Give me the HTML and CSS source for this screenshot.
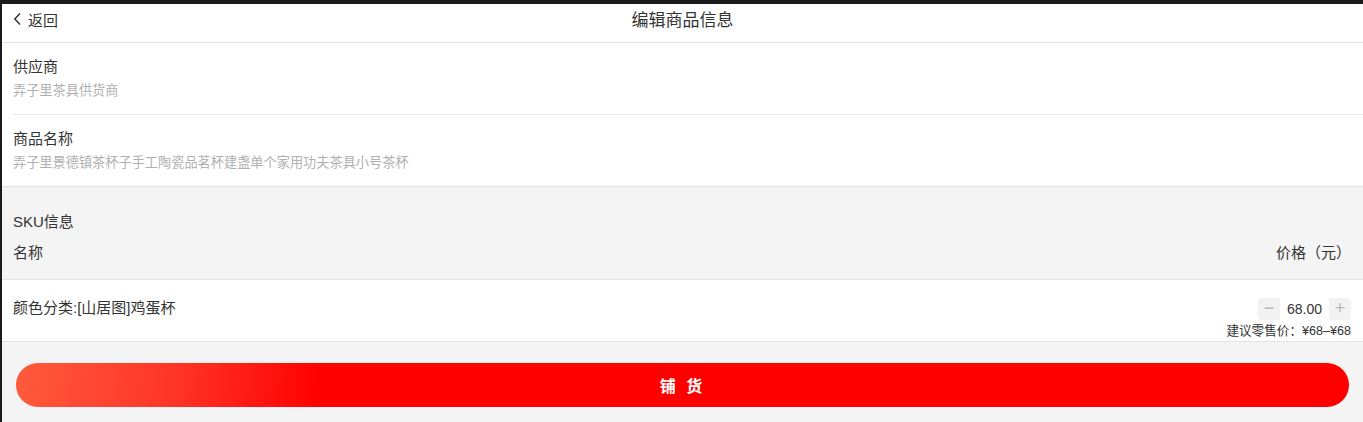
FILE: index.html
```html
<!DOCTYPE html>
<html lang="zh-CN">
<head>
    <meta charset="UTF-8">
    <meta name="viewport" content="width=device-width, initial-scale=1.0">
    <title>编辑商品信息</title>
    <link rel="stylesheet" href="styles.css">
</head>
<body>
    <div class="page">
        <div class="navBar">
            <div class="back">
                <svg width="9" height="14" viewBox="0 0 9 14"><path d="M7 1.5 L1.8 7 L7 12.5" fill="none" stroke="#333" stroke-width="1.5"/></svg>
                <span>返回</span>
            </div>
            <div class="navTitle">编辑商品信息</div>
        </div>

        <div class="field inset">
            <div class="fieldName">供应商</div>
            <div class="fieldValue">弄子里茶具供货商</div>
        </div>
        <div class="field">
            <div class="fieldName">商品名称</div>
            <div class="fieldValue">弄子里景德镇茶杯子手工陶瓷品茗杯建盏单个家用功夫茶具小号茶杯</div>
        </div>

        <div class="skuHead">
            <div class="skuTitle">SKU信息</div>
            <div class="skuCols">
                <span>名称</span>
                <span class="priceCol">价格（元）</span>
            </div>
        </div>

        <div class="skuRow">
            <div class="skuName">颜色分类:[山居图]鸡蛋杯</div>
            <div class="skuPrice">
                <div class="stepper">
                    <span class="step">−</span>
                    <span class="num">68.00</span>
                    <span class="step">+</span>
                </div>
                <div class="retail">建议零售价：¥68–¥68</div>
            </div>
        </div>

        <div class="footer">
            <button class="submit">铺 货</button>
        </div>
    </div>
</body>
</html>
```

FILE: styles.css
```css
html, body {
    margin: 0;
    height: 100%;
}
body {
    background: #1b1b1b;
    font-family: "Liberation Sans", "Noto Sans CJK SC", sans-serif;
    color: #333;
}
.page {
    margin: 4px 0 0 2px;
    height: calc(100% - 4px);
    background: #f4f4f4;
    display: flex;
    flex-direction: column;
}
.navBar {
    height: 39px;
    box-sizing: border-box;
    padding-bottom: 8px;
    background: #fff;
    border-bottom: 1px solid #e3e3e3;
    display: flex;
    align-items: center;
    position: relative;
}
.back {
    display: flex;
    align-items: center;
    gap: 6px;
    padding-left: 11px;
    font-size: 15px;
}
.navTitle {
    position: absolute;
    left: 0;
    right: 0;
    top: 7px;
    line-height: 20px;
    text-align: center;
    font-size: 17px;
    pointer-events: none;
}
.field {
    background: #fff;
    padding: 14px 11px 14px;
    border-bottom: 1px solid #e3e3e3;
}
.field.inset {
    border-bottom: none;
    background: linear-gradient(#e8e8e8, #e8e8e8) no-repeat 11px 100% / 100% 1px, #fff;
    padding-bottom: 15px;
}
.fieldName {
    font-size: 15px;
    line-height: 20px;
}
.fieldValue {
    margin-top: 5px;
    font-size: 13.2px;
    line-height: 18px;
    color: #b0b0b0;
}
.skuHead {
    padding: 25px 12px 16px 11px;
    border-bottom: 1px solid #e3e3e3;
    font-size: 15px;
}
.skuTitle {
    line-height: 20px;
}
.skuCols {
    margin-top: 11px;
    line-height: 20px;
    display: flex;
    justify-content: space-between;
}
.skuRow {
    background: #fff;
    display: flex;
    justify-content: space-between;
    padding: 0 12px 2px 11px;
    border-bottom: 1px solid #e3e3e3;
}
.skuName {
    margin-top: 18px;
    font-size: 15px;
    line-height: 20px;
}
.skuPrice {
    padding-top: 18px;
    display: flex;
    flex-direction: column;
    align-items: flex-end;
}
.stepper {
    display: flex;
    height: 22px;
    border-radius: 4px;
    overflow: hidden;
    background: #f2f2f2;
}
.step {
    width: 22px;
    text-align: center;
    line-height: 21px;
    font-size: 18px;
    color: #b8b8b8;
}
.num {
    background: #fff;
    width: 49px;
    text-align: center;
    line-height: 22px;
    font-size: 14px;
    color: #333;
}
.retail {
    margin-top: 3px;
    font-size: 12.6px;
    line-height: 16px;
    color: #333;
}
.footer {
    flex: 1;
    padding: 21px 14px 0;
}
.submit {
    width: 100%;
    height: 44px;
    border: none;
    border-radius: 22px;
    background: linear-gradient(95deg, #ff5a3c 0%, #ff3526 12%, #ff0000 23%, #ff0000 100%);
    color: #fff;
    font-family: inherit;
    font-size: 16px;
    font-weight: bold;
    letter-spacing: 3px;
}
```
